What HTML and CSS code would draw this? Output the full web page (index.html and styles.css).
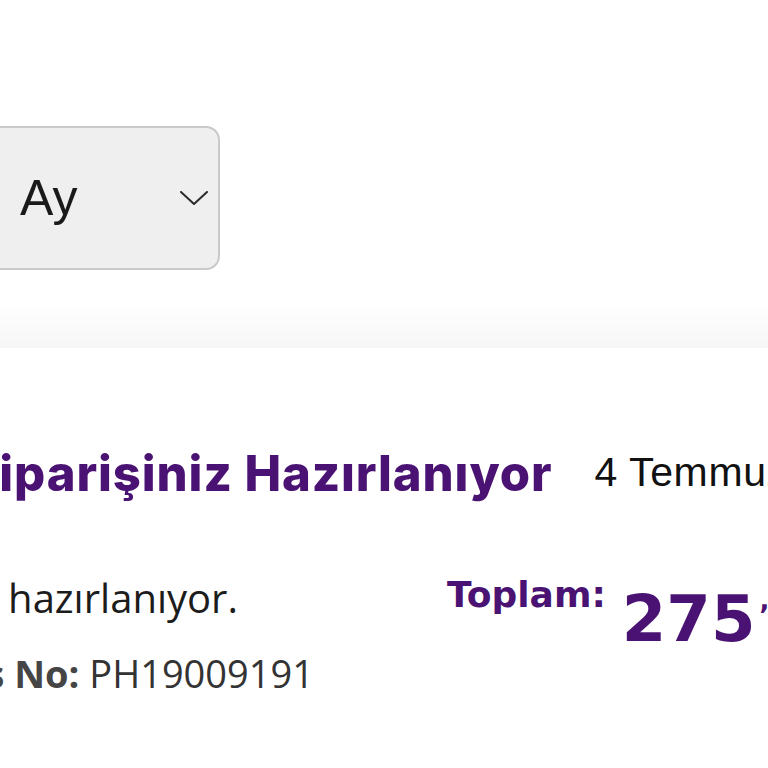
FILE: index.html
```html
<!DOCTYPE html>
<html lang="tr">
<head>
<meta charset="utf-8">
<title>Siparişlerim</title>
<link rel="stylesheet" href="styles.css">
</head>
<body>
<div class="page">
  <section class="filter">
    <div class="select">
      <span class="select-value">Ay</span>
      <svg class="chevron" width="28" height="14" viewBox="0 0 28 14" aria-hidden="true"><path d="M1 1 L14 13 L27 1" fill="none" stroke="#2b2b2b" stroke-width="2" stroke-linecap="round" stroke-linejoin="round"/></svg>
    </div>
  </section>
  <div class="band"></div>
  <section class="order">
    <div class="order-head">
      <h2 class="order-title">Siparişiniz Hazırlanıyor</h2>
      <span class="order-date">4 Temmuz 2024</span>
    </div>
    <div class="order-body">
      <div class="order-info">
        <p class="order-desc">Siparişiniz hazırlanıyor.</p>
        <p class="order-no"><b class="order-no-label">Sipariş No:</b> PH19009191</p>
      </div>
      <div class="order-total">
        <span class="total-label">Toplam:</span>
        <span class="total-value">275<span class="total-cents">,00 TL</span></span>
      </div>
    </div>
  </section>
</div>
</body>
</html>
```

FILE: styles.css
```css
html, body {
  margin: 0;
  padding: 0;
  background: #ffffff;
}
body {
  width: 768px;
  height: 768px;
  overflow: hidden;
}
.page {
  width: 768px;
}
.filter {
  height: 300px;
  box-sizing: border-box;
  padding-top: 126px;
}
.select {
  margin-left: -60px;
  width: 280px;
  height: 144px;
  box-sizing: border-box;
  border: 2px solid #c9c9c9;
  border-radius: 14px;
  background: #efefef;
  display: flex;
  align-items: center;
  justify-content: space-between;
  padding-left: 78px;
  padding-right: 10px;
}
.select-value {
  font-family: "Liberation Sans", Arial, sans-serif;
  font-size: 50px;
  color: #1a1a1a;
  line-height: 1;
}
.chevron {
  display: block;
}
.band {
  height: 48px;
  background: linear-gradient(to bottom, #ffffff 0%, #fcfcfc 35%, #f6f6f6 100%);
}
.order {
  padding-top: 96px;
  white-space: nowrap;
}
.order-head {
  display: flex;
  align-items: flex-start;
  gap: 42px;
  margin-left: -34px;
}
.order-title {
  margin: 0;
  font-family: Inter, Roboto, "Liberation Sans", sans-serif;
  font-weight: 800;
  font-size: 49px;
  line-height: 60px;
  letter-spacing: 0.9px;
  color: #4a1272;
}
.order-date {
  margin-top: 4px;
  font-family: "Liberation Sans", Arial, sans-serif;
  font-size: 41px;
  line-height: 48px;
  letter-spacing: 0.6px;
  color: #111111;
}
.order-body {
  display: flex;
  align-items: flex-start;
  margin-top: 66px;
}
.order-info {
  width: 435px;
  flex: none;
}
.order-desc,
.order-no {
  margin: 0;
  font-family: "Open Sans", sans-serif;
  font-size: 40px;
  line-height: 56px;
  color: #1c1c1c;
}
.order-desc {
  margin-left: -190px;
}
.order-no {
  margin-top: 19px;
  margin-left: -123px;
  font-size: 38px;
  color: #333333;
}
.order-no-label {
  font-weight: 700;
  color: #454545;
}
.order-total {
  display: flex;
  align-items: flex-start;
  gap: 16px;
  margin-left: 12px;
  color: #4a1272;
  font-family: "DejaVu Sans", sans-serif;
  font-weight: 700;
}
.total-label {
  margin-top: 5px;
  font-size: 36px;
  line-height: 40px;
}
.total-value {
  margin-top: 17px;
  font-size: 64px;
  line-height: 64px;
}
.total-cents {
  margin-left: 4px;
  font-size: 26px;
  vertical-align: top;
  line-height: 26px;
}
```
